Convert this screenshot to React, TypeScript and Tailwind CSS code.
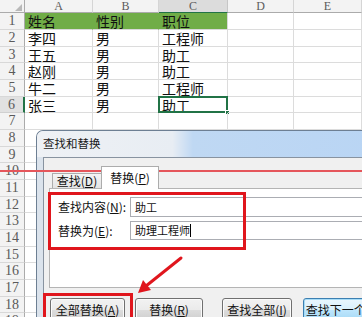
import React from "react";

const letters = ["A", "B", "C", "D", "E"];
const data: Record<number, string[]> = {
  1: ["姓名", "性别", "职位"],
  2: ["李四", "男", "工程师"],
  3: ["王五", "男", "助工"],
  4: ["赵刚", "男", "助工"],
  5: ["牛二", "男", "工程师"],
  6: ["张三", "男", "助工"],
};
const rowH = ["h-[17px]", "h-[17px]", "h-[16px]"];
const rows = Array.from({ length: 19 }, (_, i) => i + 1);

function Btn({ w, children, def }: { w: string; children: React.ReactNode; def?: boolean }) {
  return (
    <div
      className={
        "h-[23px] shrink-0 rounded-[3px] border flex items-center justify-center text-[12px] text-[#111] " +
        w +
        (def
          ? " border-[#3c7fb1] bg-[linear-gradient(#eaf6fd_0%,#d9f0fc_50%,#bee6fd_51%,#a7d9f5_100%)] shadow-[inset_0_0_0_1px_#a6dcf7]"
          : " border-[#707070] bg-[linear-gradient(#f2f2f2_0%,#ebebeb_50%,#dddddd_51%,#cfcfcf_100%)] shadow-[inset_0_0_0_1px_#fbfbfb]")
      }
    >
      {children}
    </div>
  );
}

export default function App() {
  return (
    <div className="relative w-[362px] h-[317px] overflow-hidden bg-white font-['Noto_Sans_CJK_SC','Noto_Sans',sans-serif]">
      {/* spreadsheet */}
      <div className="grid grid-cols-[25px_68px_66px_69px_66px_68px]">
        <div className="relative h-[13px] bg-[#f3f3f3] border-r border-b border-[#ababab]">
          <svg className="absolute left-0 top-0" width="25" height="13">
            <polygon points="15,11 22,11 22,4" fill="#b9b9b9" />
          </svg>
        </div>
        {letters.map((l) => (
          <div
            key={l}
            className={
              "h-[13px] border-r border-b flex items-center justify-center text-[12px] leading-none text-[#5b5b5b] font-['Liberation_Serif',serif] " +
              (l === "C" ? "bg-[#dcdcdc] border-r-[#c6c6c6] border-b-[#217346]" : "bg-[#f3f3f3] border-r-[#d5d5d5] border-b-[#ababab]")
            }
          >
            {l}
          </div>
        ))}
        {rows.map((r) => {
          const h = rowH[(r - 1) % 3];
          const vals = data[r] || [];
          return (
            <React.Fragment key={r}>
              <div
                className={
                  h +
                  " border-b flex items-center justify-center text-[14px] leading-none text-[#5a5a5a] font-['Liberation_Serif',serif] " +
                  (r === 6
                    ? "bg-[#e1e1e1] border-b-[#d0d0d0] border-r-2 border-r-[#217346]"
                    : "bg-[#f3f3f3] border-b-[#d8d8d8] border-r border-r-[#ababab]")
                }
              >
                {r}
              </div>
              {letters.map((l, ci) => {
                const green = r === 1 && ci < 3;
                const sel = r === 6 && ci === 2;
                return (
                  <div
                    key={l}
                    className={
                      h +
                      " relative border-b border-r flex items-center pl-[3px] text-[14px] leading-none text-[#111] whitespace-nowrap " +
                      (green
                        ? "bg-[#70ad47] border-b-[#d9d9d9] " + (ci < 2 ? "border-r-[#70ad47]" : "border-r-[#d9d9d9]")
                        : "border-[#dcdcdc]")
                    }
                  >
                    {vals[ci] || ""}
                    {sel && (
                      <div className="absolute -left-px -top-px -right-px -bottom-px border-2 border-[#217346]">
                        <div className="absolute -right-[4px] -bottom-[4px] w-[5px] h-[5px] bg-[#217346] border border-white" />
                      </div>
                    )}
                  </div>
                );
              })}
            </React.Fragment>
          );
        })}
      </div>

      {/* dialog */}
      <div className="absolute left-[36px] top-[130px] w-[340px] h-[200px] rounded-tl-[7px] border-l border-t border-[#6d7f93] bg-[#dbe3ec] overflow-hidden">
        <div className="h-[26px] flex items-center pl-[6px] text-[11.5px] text-[#1a1a1a] bg-[linear-gradient(90deg,#eef1f5_0%,#e8edf3_40%,#bfd8f3_46%,#b9d5f4_100%)]">
          查找和替换
        </div>
        <div className="ml-[6px] h-[200px] border-l border-t border-[#8893a0] bg-[#f0f0f0] pl-[5px] pt-[8px]">
          <div className="flex items-end pl-[3px]">
            <div className="h-[15px] w-[50px] border border-b-0 border-[#acacac] bg-[linear-gradient(#f4f4f4,#e4e4e4)] flex items-center justify-center text-[12px] leading-none text-[#111]">
              查找(<span className="underline">D</span>)
            </div>
            <div className="relative z-10 -mb-px -ml-px h-[23px] w-[58px] border border-b-0 border-[#acacac] bg-white flex items-center justify-center text-[12px] leading-none text-[#111]">
              替换(<span className="underline">P</span>)
            </div>
          </div>
          <div className="h-[100px] border border-[#b4b4b4] bg-white pt-[8px] pl-[8px] text-[12px] leading-none text-[#111]">
            <div className="flex items-center">
              <div className="w-[72px] shrink-0">
                查找内容(<span className="underline">N</span>):
              </div>
              <div className="h-[20px] flex-1 border border-[#abadb3] flex items-center pl-[4px] text-[11px]">助工</div>
            </div>
            <div className="mt-[4px] flex items-center">
              <div className="w-[72px] shrink-0">
                替换为(<span className="underline">E</span>):
              </div>
              <div className="h-[19px] flex-1 border border-[#abadb3] flex items-center pl-[4px] text-[11px]">
                助理工程师<span className="inline-block w-px h-[13px] bg-black" />
              </div>
            </div>
          </div>
          <div className="mt-[10px] flex pl-px">
            <Btn w="w-[75px]">
              全部替换(<span className="underline">A</span>)
            </Btn>
            <div className="w-[10px] shrink-0" />
            <Btn w="w-[68px]">
              替换(<span className="underline">R</span>)
            </Btn>
            <div className="w-[19px] shrink-0" />
            <Btn w="w-[70px]">
              查找全部(<span className="underline">I</span>)
            </Btn>
            <div className="w-[11px] shrink-0" />
            <Btn w="w-[80px]" def>
              查找下一个(<span className="underline">F</span>)
            </Btn>
          </div>
        </div>
      </div>

      {/* annotations */}
      <div className="absolute left-0 top-[170px] w-[362px] h-[2px] bg-[#e5565b]" />
      <div className="absolute left-[48px] top-[192px] w-[198px] h-[58px] border-[3px] border-[#e0161d]" />
      <div className="absolute left-[43px] top-[293px] w-[90px] h-[30px] border-[3px] border-[#e0161d]" />
      <svg className="absolute left-0 top-0" width="362" height="317">
        <line x1="181" y1="258" x2="146" y2="286" stroke="#e0161d" strokeWidth="3" strokeLinecap="round" />
        <polygon points="138,293 143,280 151,290" fill="#e0161d" />
      </svg>
    </div>
  );
}
